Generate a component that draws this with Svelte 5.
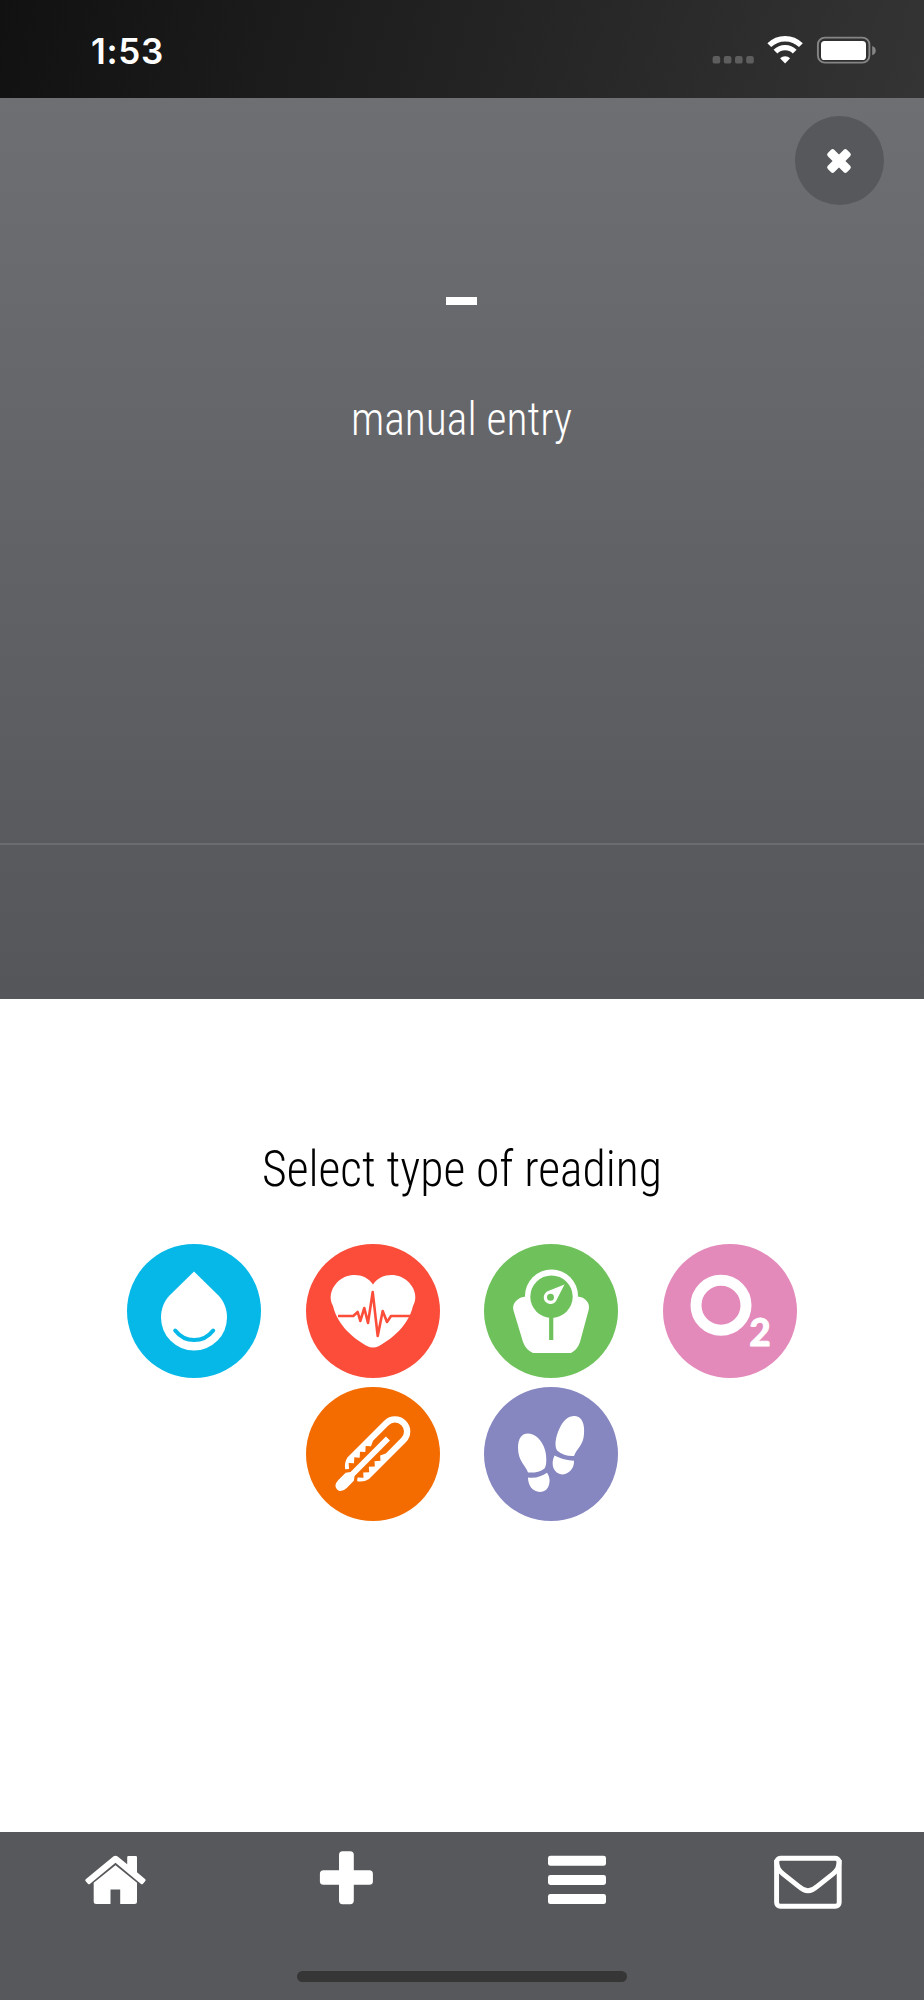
<script>
  const readings = [
    { id: "glucose", label: "Blood glucose", color: "#05b8e8" },
    { id: "pressure", label: "Blood pressure", color: "#fc4d3b" },
    { id: "weight", label: "Weight", color: "#6fc25b" },
    { id: "oxygen", label: "Oxygen", color: "#e38abb" },
    { id: "temperature", label: "Temperature", color: "#f46c00" },
    { id: "steps", label: "Steps", color: "#8686c1" }
  ];

  const tabs = ["home", "add", "menu", "messages"];
</script>

<div class="screen">
  <header class="status">
    <span class="time">1:53</span>
    <svg class="indicators" width="166" height="32" viewBox="0 0 166 32">
      <g fill="#5e5e5e">
        <rect x="2.6" y="22" width="7.6" height="7.6" rx="2.2" />
        <rect x="13.8" y="22" width="7.6" height="7.6" rx="2.2" />
        <rect x="25" y="22" width="7.6" height="7.6" rx="2.2" />
        <rect x="36.2" y="22" width="7.6" height="7.6" rx="2.2" />
      </g>
      <g fill="none" stroke="#fff" stroke-width="5.4">
        <path d="M59.3 11.200a22.400 22.400 0 0 1 31.600 0" />
        <path d="M65.500 17.600a13.600 13.600 0 0 1 19.200 0" />
      </g>
      <path d="M75.100 29.500l-5-5.200a7.400 7.400 0 0 1 10 0z" fill="#fff" />
      <rect x="107.900" y="3.600" width="51.500" height="25" rx="7" fill="none" stroke="#858585" stroke-width="1.900" />
      <rect x="111" y="7" width="45" height="19" rx="3.600" fill="#fff" />
      <path d="M162.200 12c4.800 1.400 4.800 7.900 0 9.300z" fill="#858585" />
    </svg>
  </header>

  <section class="summary">
    <button class="close" aria-label="Close">
      <svg width="26" height="26" viewBox="-13 -13 26 26">
        <g transform="rotate(45)" fill="#fff">
          <rect x="-13.500" y="-4.500" width="27" height="9" rx="2.200" />
          <rect x="-4.500" y="-13.500" width="9" height="27" rx="2.200" />
        </g>
      </svg>
    </button>
    <div class="value"></div>
    <svg class="source" width="260" height="70" viewBox="0 0 260 70">
      <text x="19" y="51" font-size="45.500" textLength="221" lengthAdjust="spacingAndGlyphs">manual entry</text>
    </svg>
    <div class="divider"></div>
  </section>

  <main>
    <svg class="heading" width="440" height="76" viewBox="0 0 440 76">
      <text x="20" y="53" font-size="50.500" textLength="400" lengthAdjust="spacingAndGlyphs">Select type of reading</text>
    </svg>

    <div class="readings">
      {#each readings as reading (reading.id)}
        <button class="reading" aria-label={reading.label} style="background: {reading.color}; color: {reading.color}">
          <svg width="134" height="134" viewBox="0 0 134 134" fill="#fff">
            {#if reading.id === "glucose"}
              <path d="M67 27.500L91.500 51.500C97 57.500 100 65 100 73.500a33 33 0 0 1-66 0C34 65 37 57.500 42.500 51.500z" />
              <path class="cut" d="M48.200 86.500c10 12.800 28 12.800 38 0" stroke-width="4" stroke-linecap="round" />
            {:else if reading.id === "pressure"}
              <path d="M67 40.500C59 28.500 41 28 31 38.500C24 46 23 55 27 62C32 82 47 94 61 102Q67 105 73 102C87 94 102 82 107 62C111 55 110 46 103 38.500C93 28 75 28.500 67 40.500z" />
              <path class="cut" d="M32 72H47.300L51.700 68L54.300 77L58.300 64L62 79L66.700 48L71.700 92L76.700 67L81 78L85 72H104" stroke-width="2.600" stroke-linejoin="round" />
            {:else if reading.id === "weight"}
              <path d="M42 52.500C34 53 27.500 59 29.500 66.500L39 98Q42 106 49 109H87Q93.500 105.500 96 98L104.500 66.500C107 59 101 53 93.500 52.500z" />
              <circle cx="67.500" cy="52" r="26.500" />
              <circle cx="67.500" cy="52.700" r="21.200" fill="currentColor" />
              <path class="cut" d="M67.200 72V96" stroke-width="4.200" />
              <path d="M80.500 40.500L72.800 55.500A6.700 6.700 0 1 1 63.500 47.300z" />
              <circle cx="66.500" cy="53.200" r="3.500" fill="currentColor" />
            {:else if reading.id === "oxygen"}
              <circle cx="58" cy="61.300" r="25" fill="none" stroke="#fff" stroke-width="11" />
              <text class="subscript" x="86.300" y="102.300">2</text>
            {:else if reading.id === "temperature"}
              <g transform="translate(89 44.500) rotate(135)">
                <path d="M0 15.300H52Q58 14 62 8.500L59 6L55 10.500L51.500 6.500L47 10.500L43.500 6.500L39 10.500L35.500 6.500L31 10.500L27.500 6.500L22 9H0A9 9 0 0 1 0-9H22L27.500-6.500L31-10.500L35.500-6.500L39-10.500L43.500-6.500L47-10.500L51.500-6.500L55-10.500L59-6L62-8.500Q58-14 52-15.300H0A15.300 15.300 0 0 0 0 15.300z" />
                <path d="M10-2.900H60L64-5.800H74Q82-5.500 82 0Q82 5.500 74 5.800H64L60 2.900H10z" />
              </g>
            {:else}
              <path d="M44 85.500C42 79 34 74 34 61C34 51 38 46.500 44 46.500C55 46.500 63 61 62.300 73Q62.300 79 60.500 81.500C56 85 50 86 44 85.500z" />
              <path d="M44 90.500C52 91.500 58 89 63 85.700Q66 90 65.500 95C65 101.500 61 105 56 105C48 104.500 44 98 44 90.500z" />
              <path d="M73 63.500C70 58 72 49 75.500 41.500C79 33 85 28.500 91 28.900C97.500 29.500 101 36 100 47C99.500 58 93 61 90 69C84 69.500 78 67.500 73 63.500z" />
              <path d="M70.500 68.500C76 71.500 84 73.500 90 73.700C90.500 82 84 87.500 78 87.500C70 86.500 66 78 70.500 68.500z" />
            {/if}
          </svg>
        </button>
      {/each}
    </div>
  </main>

  <nav>
    <div class="tabs">
      {#each tabs as tab}
        <button class="tab" aria-label={tab}>
          <svg width="71" height="62" viewBox="0 0 71 62" fill="#fff">
            {#if tab === "home"}
              <path d="M35.500 15.200L57 32.800V51.500Q57 54 54.500 54H40.200V39.500H30.500V54H16.200Q13.700 54 13.700 51.500V32.800z" />
              <path d="M33.300 6.500Q35.500 5.100 37.700 6.500L47.200 14.300V7.200Q47.200 6 48.400 6H55.800Q57 6 57 7.200V22.300L65.300 29.300Q66 30.200 65.300 31.100L63 33.800Q62 34.700 61 34L35.500 12.700L9.800 34Q8.800 34.700 7.900 33.800L5.500 31.100Q4.900 30.200 5.700 29.300z" />
            {:else if tab === "add"}
              <rect x="8.900" y="20.300" width="53" height="14.500" rx="3.600" />
              <rect x="28" y="1.200" width="14.800" height="53" rx="3.600" />
            {:else if tab === "menu"}
              <rect x="6" y="5.800" width="58" height="10" rx="2.400" />
              <rect x="6" y="25" width="58" height="10" rx="2.400" />
              <rect x="6" y="44.100" width="58" height="10" rx="2.400" />
            {:else}
              <g fill="none" stroke="#fff" stroke-width="4.900">
                <rect x="3.600" y="8.300" width="62.600" height="48" rx="3.800" />
                <path d="M3.600 10C3.600 18 6 20.500 10 23.800L26 36.500Q35 45 44 36.500L60 23.800C64 20.500 66.200 18 66.200 10" />
              </g>
            {/if}
          </svg>
        </button>
      {/each}
    </div>
    <div class="home-indicator"></div>
  </nav>
</div>

<style>
  :global(body) {
    margin: 0;
  }

  .screen {
    display: flex;
    flex-direction: column;
    width: 924px;
    height: 2000px;
    background: #fff;
    font-family: "Roboto Condensed", Roboto, sans-serif;
  }

  button {
    padding: 0;
    border: 0;
    background: none;
  }

  svg {
    display: block;
    overflow: visible;
  }

  .status {
    display: flex;
    justify-content: space-between;
    box-sizing: border-box;
    height: 98px;
    padding: 34px 48px 0 91px;
    background: linear-gradient(105deg, #111 0%, #343434 100%);
  }

  .time {
    color: #fff;
    font: 600 35px/34px Inter, sans-serif;
    letter-spacing: 0.7px;
  }

  .summary {
    display: flex;
    flex-direction: column;
    align-items: center;
    height: 901px;
    background: linear-gradient(#6e6f73, #55565a);
  }

  .close {
    display: flex;
    align-items: center;
    justify-content: center;
    align-self: flex-end;
    width: 89px;
    height: 89px;
    margin: 18px 40.500px 0 0;
    border-radius: 50%;
    background: #57585b;
  }

  .value {
    width: 31px;
    height: 8px;
    margin: 92px 1px 0 0;
    background: #fff;
  }

  .source {
    margin-top: 79px;
    fill: #fff;
    font-weight: 300;
  }

  .divider {
    width: 100%;
    height: 2px;
    margin-top: 389px;
    background: #6b6c70;
  }

  main {
    display: flex;
    flex: 1;
    flex-direction: column;
    align-items: center;
  }

  .heading {
    margin-top: 134px;
    fill: #000;
    font-weight: 300;
  }

  .readings {
    display: flex;
    flex-wrap: wrap;
    justify-content: center;
    gap: 9px 44.600px;
    width: 680px;
    margin-top: 35px;
  }

  .reading {
    width: 134px;
    height: 134px;
    border-radius: 50%;
  }

  .cut {
    fill: none;
    stroke: currentColor;
  }

  .subscript {
    font: 900 37px Lato, sans-serif;
    stroke: #fff;
    stroke-width: 0.8px;
  }

  nav {
    display: flex;
    flex-direction: column;
    align-items: center;
    height: 168px;
    background: #57585b;
  }

  .tabs {
    display: grid;
    grid-template-columns: repeat(4, 1fr);
    width: 100%;
    padding-top: 18px;
  }

  .tab {
    display: flex;
    justify-content: center;
  }

  .home-indicator {
    width: 330px;
    height: 11px;
    margin-top: 59px;
    border-radius: 6px;
    background: #363636;
  }
</style>
